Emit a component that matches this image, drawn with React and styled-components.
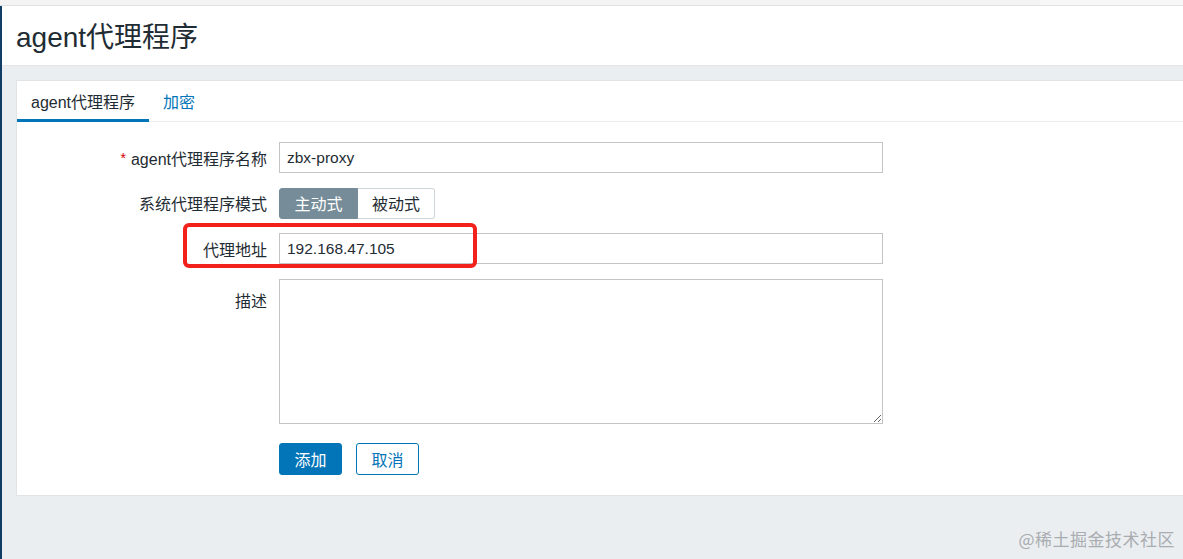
import React from "react";
import styled, { createGlobalStyle } from "styled-components";

const GlobalStyle = createGlobalStyle`
  html, body { margin: 0; padding: 0; }
  body {
    background: #ebeef0;
    font-family: "Liberation Sans", Arial, "Noto Sans CJK SC", sans-serif;
    color: #1f2c33;
    width: 1183px;
    height: 559px;
    overflow: hidden;
  }
  * { box-sizing: border-box; }
`;

const Page = styled.div`
  display: flex;
  flex-direction: column;
  height: 559px;
  position: relative;
`;

const TopStrip = styled.div`
  height: 6px;
  background: linear-gradient(to right, #f3f3f3 0, #f3f3f3 1040px, #f7f7f7 1040px);
  border-bottom: 1px solid #e2e2e2;
  flex-shrink: 0;
`;

const Body = styled.div`
  display: flex;
  flex: 1;
`;

const SideStrip = styled.div`
  width: 2px;
  background: #103d66;
  flex-shrink: 0;
`;

const Main = styled.div`
  flex: 1;
  display: flex;
  flex-direction: column;
`;

const Header = styled.header`
  height: 60px;
  background: #fff;
  padding-left: 14px;
  display: flex;
  align-items: center;
  border-bottom: 1px solid #e4e6e8;
`;

const Title = styled.h1`
  margin: 0;
  font-size: 28px;
  font-weight: normal;
  color: #1f2c33;
  padding-bottom: 2px;
`;

const Content = styled.div`
  padding: 14px 0 0 14px;
`;

const Card = styled.section`
  background: #fff;
  border: 1px solid #e1e4e6;
  border-right: none;
  padding-bottom: 20px;
`;

const TabBar = styled.nav`
  display: flex;
  height: 41px;
  border-bottom: 1px solid #ebebeb;
`;

const Tab = styled.div`
  padding: 0 14px;
  display: flex;
  align-items: center;
  font-size: 16px;
  color: ${(p) => (p.$active ? "#1f2c33" : "#0275b8")};
  border-bottom: 3px solid ${(p) => (p.$active ? "#0275b8" : "transparent")};
  margin-bottom: -1px;
  padding-top: 2px;
`;

const Form = styled.div`
  display: grid;
  grid-template-columns: 250px 604px;
  column-gap: 12px;
  row-gap: 14.5px;
  padding-top: 20px;
`;

const Label = styled.div`
  font-size: 16px;
  color: #1f2c33;
  text-align: right;
  display: flex;
  justify-content: flex-end;
  align-items: ${(p) => (p.$top ? "flex-start" : "center")};
  padding-top: ${(p) => (p.$top ? "9px" : "0")};
  white-space: nowrap;
`;

const Required = styled.span`
  color: #d40000;
  margin-right: 5px;
  font-size: 14px;
`;

const Field = styled.div`
  position: relative;
  display: flex;
`;

const TextInput = styled.input`
  width: 604px;
  height: 31px;
  border: 1px solid #c4c4c4;
  padding: 0 7px;
  font-size: 15.5px;
  font-family: inherit;
  color: #1f2c33;
  background: #fff;
  outline: none;
`;

const TextArea = styled.textarea`
  width: 604px;
  height: 145px;
  border: 1px solid #c4c4c4;
  padding: 6px 7px;
  font-size: 15.5px;
  font-family: inherit;
  resize: both;
  outline: none;
  display: block;
`;

const Segmented = styled.div`
  display: flex;
  height: 31px;
`;

const Segment = styled.div`
  display: flex;
  align-items: center;
  justify-content: center;
  width: ${(p) => p.$w}px;
  font-size: 16px;
  background: ${(p) => (p.$active ? "#768d99" : "#fff")};
  color: ${(p) => (p.$active ? "#fff" : "#1f2c33")};
  border: 1px solid ${(p) => (p.$active ? "#768d99" : "#cfd6da")};
  border-left: ${(p) => (p.$active ? "1px solid #768d99" : "none")};
  border-radius: ${(p) => (p.$first ? "3px 0 0 3px" : "0 3px 3px 0")};
`;

const Highlight = styled.div`
  position: absolute;
  left: -96px;
  top: -10px;
  width: 294px;
  height: 45px;
  border: 4px solid #f2211c;
  border-radius: 6px;
  pointer-events: none;
`;

const Buttons = styled.div`
  display: flex;
  gap: 14px;
  margin-top: 5px;
`;

const Button = styled.button`
  width: 63px;
  height: 32px;
  border-radius: 3px;
  font-size: 16px;
  font-family: inherit;
  border: 1px solid #0275b8;
  background: ${(p) => (p.$primary ? "#0275b8" : "#fff")};
  color: ${(p) => (p.$primary ? "#fff" : "#0275b8")};
  padding: 0;
`;

const Watermark = styled.div`
  position: absolute;
  right: 8px;
  bottom: 8px;
  font-size: 17px;
  color: #a9acb0;
  font-family: "Noto Sans CJK SC", sans-serif;
  letter-spacing: 0.5px;
`;

export default function App() {
  return (
    <>
      <GlobalStyle />
      <Page>
        <TopStrip />
        <Body>
          <SideStrip />
          <Main>
            <Header>
              <Title>agent代理程序</Title>
            </Header>
            <Content>
              <Card>
                <TabBar>
                  <Tab $active>agent代理程序</Tab>
                  <Tab>加密</Tab>
                </TabBar>
                <Form>
                  <Label>
                    <Required>*</Required>agent代理程序名称
                  </Label>
                  <Field>
                    <TextInput defaultValue="zbx-proxy" />
                  </Field>

                  <Label>系统代理程序模式</Label>
                  <Field>
                    <Segmented>
                      <Segment $active $first $w={79}>主动式</Segment>
                      <Segment $w={77}>被动式</Segment>
                    </Segmented>
                  </Field>

                  <Label>代理地址</Label>
                  <Field>
                    <TextInput defaultValue="192.168.47.105" />
                    <Highlight />
                  </Field>

                  <Label $top>描述</Label>
                  <Field>
                    <TextArea />
                  </Field>

                  <div />
                  <Buttons>
                    <Button $primary>添加</Button>
                    <Button>取消</Button>
                  </Buttons>
                </Form>
              </Card>
            </Content>
          </Main>
        </Body>
        <Watermark>@稀土掘金技术社区</Watermark>
      </Page>
    </>
  );
}
